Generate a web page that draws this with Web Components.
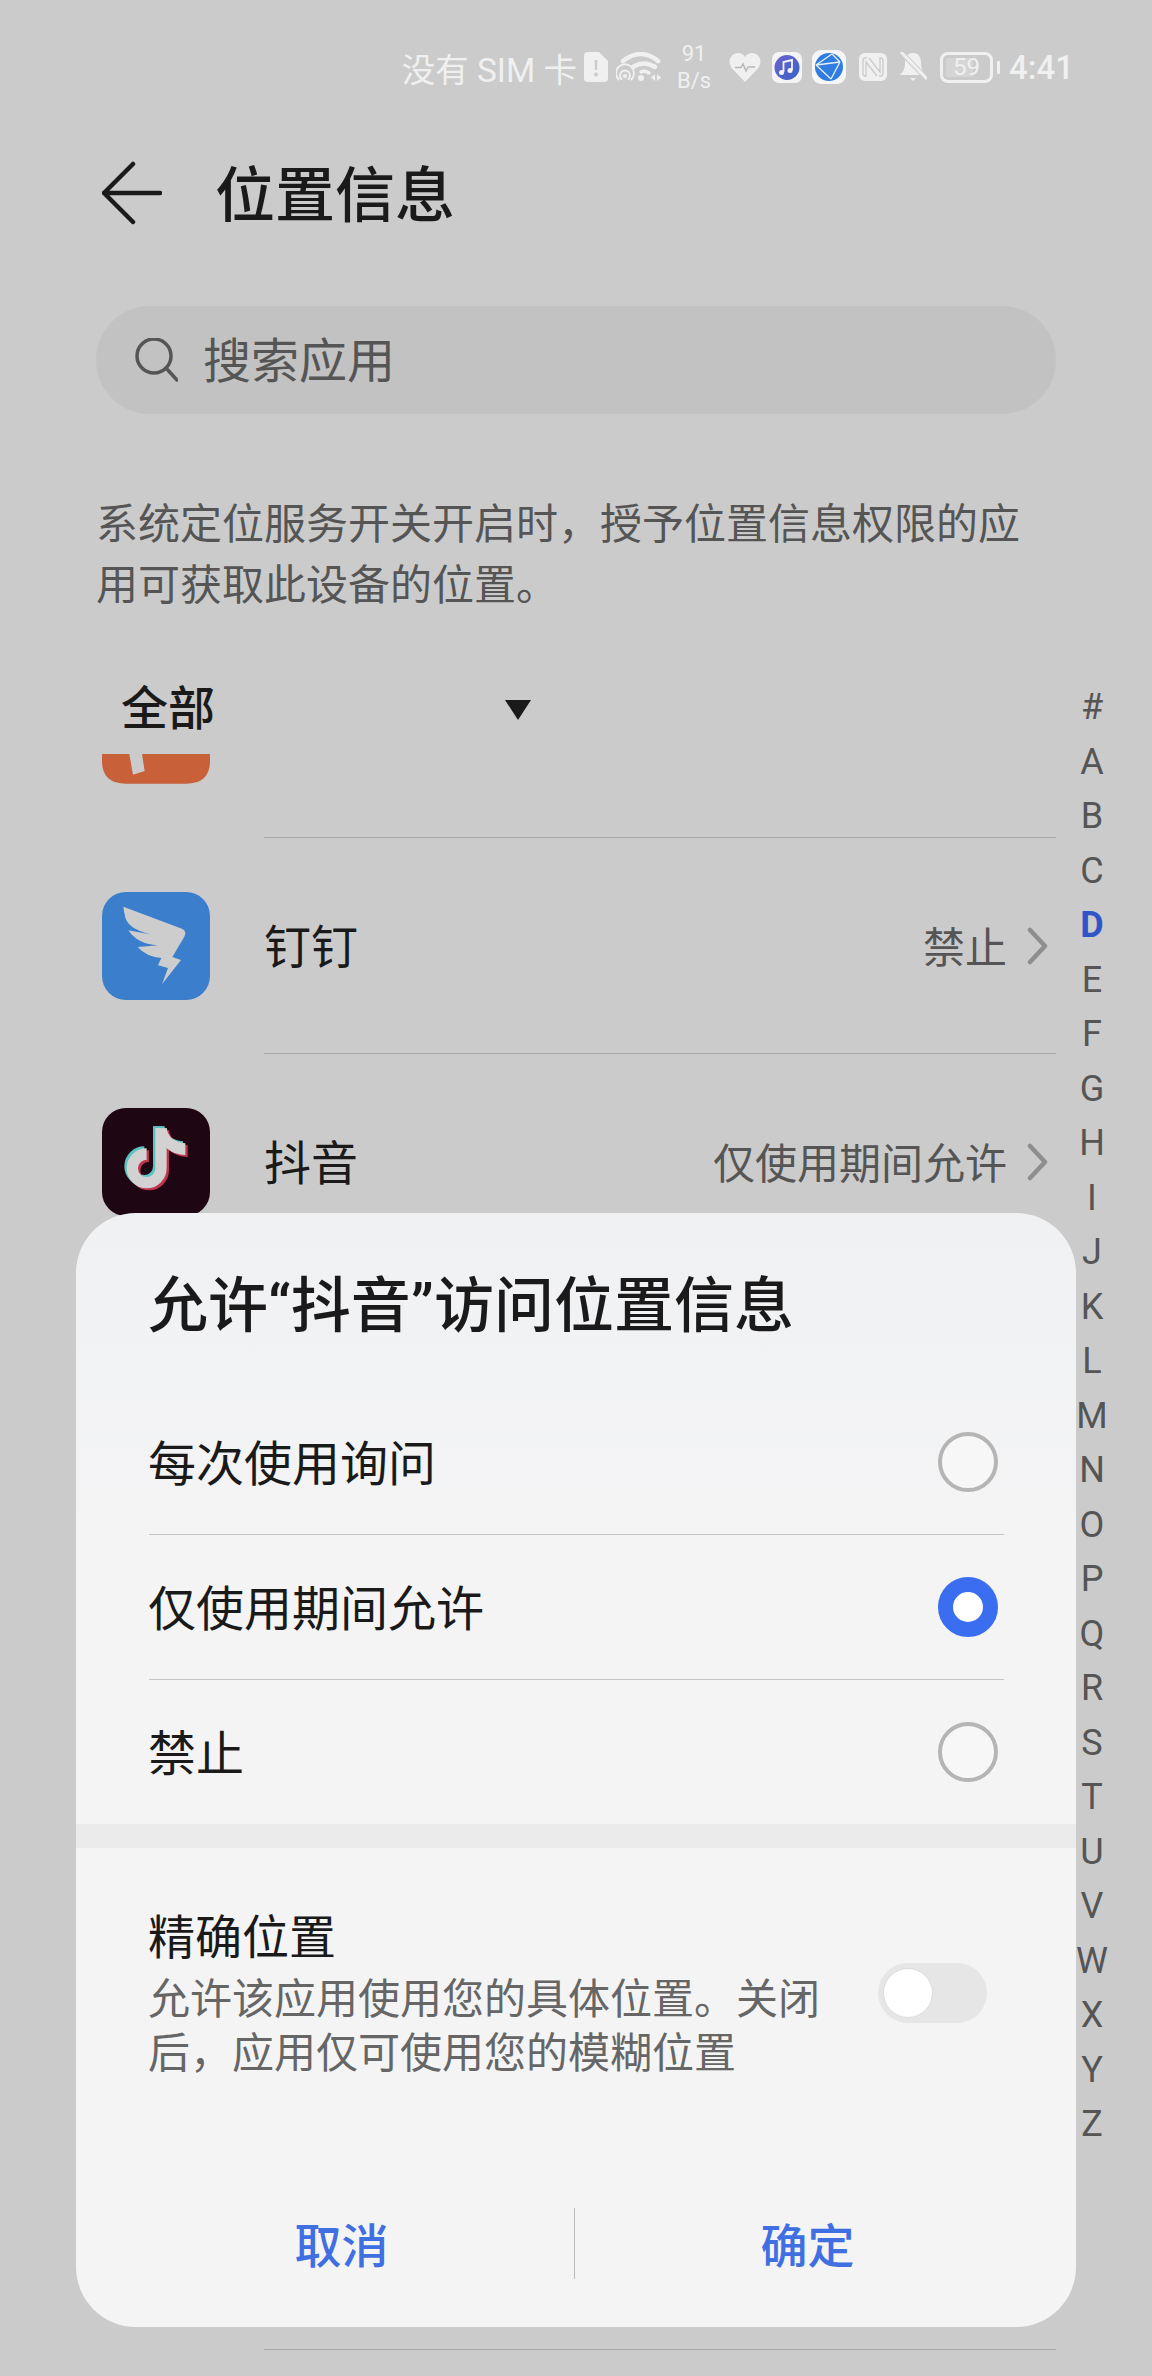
<!DOCTYPE html>
<html lang="zh-CN">
<head>
<meta charset="utf-8">
<title>位置信息</title>
<style>
  html, body {
    margin: 0;
    width: 1152px;
    height: 2376px;
    overflow: hidden;
    background: #cbcbcb;
  }
  body {
    position: relative;
    font-family: Roboto, "Noto Sans CJK SC", sans-serif;
    color: #1a1a1a;
  }
</style>
</head>
<body>
  <status-bar></status-bar>
  <page-header>位置信息</page-header>
  <search-box>搜索应用</search-box>
  <location-note>系统定位服务开关开启时，授予位置信息权限的应用可获取此设备的位置。</location-note>
  <filter-row>全部</filter-row>

  <app-list>
    <app-row clipped>
      <svg slot="icon" width="108" height="29.7" viewBox="18 41 324 89">
        <path d="M18 41H342V62Q342 130 270 130H90Q18 130 18 62Z" fill="#c8603a"/>
        <path d="M100 41H138L146 92L111 103Z" fill="#cbcbcb"/>
      </svg>
    </app-row>
    <app-row name="钉钉" value="禁止">
      <svg slot="icon" width="108" height="108" viewBox="18 18 324 324">
        <rect x="18" y="18" width="324" height="324" rx="72" fill="#3b7ecb"/>
        <path d="M82 62L258 128Q274 135 265 152L229 213L255 222L198 295L216 246L186 238L196 216Q150 212 125 183L186 178Q125 175 97 133L188 150Q100 135 88 95Q84 78 82 62Z" fill="#cdcdcd"/>
      </svg>
    </app-row>
    <app-row name="抖音" value="仅使用期间允许">
      <svg slot="icon" width="108" height="108" viewBox="18 24 324 324">
        <defs>
          <g id="note">
            <path d="M195 85V205A43 43 0 1 1 152 162" fill="none" stroke-width="34"/>
            <path d="M178 85H212Q218 125 268 130V165Q235 165 212 145Z" stroke="none"/>
          </g>
        </defs>
        <rect x="18" y="24" width="324" height="324" rx="72" fill="#1f0613"/>
        <use href="#note" x="-7" y="-6" fill="#5cc4c0" stroke="#5cc4c0"/>
        <use href="#note" x="7" y="6" fill="#c0344f" stroke="#c0344f"/>
        <use href="#note" fill="#d2d2d2" stroke="#d2d2d2"/>
      </svg>
    </app-row>
    <!-- filas tapadas por el dialogo, solo dejan ver la ultima linea -->
    <app-row style="height:1080px"></app-row>
  </app-list>

  <alpha-index active="D"></alpha-index>

  <permission-dialog heading="允许“抖音”访问位置信息" cancel="取消" confirm="确定">
    <permission-option>每次使用询问</permission-option>
    <permission-option checked>仅使用期间允许</permission-option>
    <permission-option last>禁止</permission-option>
    <precise-setting slot="extra" label="精确位置">允许该应用使用您的具体位置。关闭后，应用仅可使用您的模糊位置</precise-setting>
  </permission-dialog>

<script>
class StatusBar extends HTMLElement {
  constructor() {
    super();
    this.attachShadow({ mode: 'open' });
    this.shadowRoot.innerHTML = `
      <style>
        :host {
          display: flex;
          justify-content: flex-end;
          align-items: center;
          height: 134px;
          padding-right: 78px;
          box-sizing: border-box;
          color: #f0f0f0;
        }
        svg { display: block; flex: none; }
        .carrier { font-size: 33.5px; white-space: nowrap; }
        .speed {
          width: 34px;
          margin-left: 15px;
          font-size: 22px;
          line-height: 27px;
          text-align: center;
          white-space: nowrap;
        }
        .battery {
          width: 53px;
          height: 31px;
          margin-left: 13px;
          box-sizing: border-box;
          border: 3px solid #f0f0f0;
          border-radius: 8px;
          padding: 3px;
          background: linear-gradient(to right, rgba(255,255,255,.2) 66%, transparent 66%) content-box;
          font-size: 24px;
          line-height: 19px;
          text-align: center;
        }
        .nub {
          width: 3px;
          height: 13px;
          margin-left: 4px;
          border-radius: 1px;
          background: #f0f0f0;
        }
        .time { margin-left: 9px; font-size: 33px; font-weight: 500; }
      </style>
      <span class="carrier">没有 SIM 卡</span>
      <svg style="margin-left:7px" width="24" height="30" viewBox="0 0 24 30">
        <path d="M4 0H15L24 9V26Q24 30 20 30H4Q0 30 0 26V4Q0 0 4 0Z" fill="#f0f0f0"/>
        <path d="M10.5 8H13.5L13 18H11Z" fill="#cbcbcb"/><circle cx="12" cy="22.5" r="2" fill="#cbcbcb"/>
      </svg>
      <svg style="margin-left:8px" width="46" height="30" viewBox="0 0 46 30" fill="none" stroke="#f0f0f0" stroke-linecap="round">
        <path d="M7 9Q25 -5 42 9" stroke-width="4.500"/>
        <path d="M17 15Q28 8 39 15" stroke-width="4.500"/>
        <path d="M25 20Q29 18 33 21" stroke-width="3.500"/>
        <circle cx="25" cy="26" r="3" fill="#f0f0f0" stroke="none"/>
        <circle cx="9" cy="24" r="2" fill="#f0f0f0" stroke="none"/>
        <path d="M5.5 27A5 5 0 1 1 12.5 27" stroke-width="1.900"/>
        <path d="M2.5 27.500A9 9 0 1 1 15.500 27.500" stroke-width="1.900"/>
        <path d="M39 22V29L35 25.500Z M41 22V29L45 25.500Z" fill="#f0f0f0" stroke="none"/>
      </svg>
      <div class="speed">91<br>B/s</div>
      <svg style="margin-left:18px" width="32" height="29" viewBox="0 0 32 29">
        <path d="M16 29L3 15.500C-3 7 3 0 9 0C12 0 15 2 16 4C17 2 20 0 23 0C29 0 35 7 29 15.500Z" fill="#f0f0f0"/>
        <path d="M6 14.500H12L14 11L17 18L19 14H26" fill="none" stroke="#b8b8b8" stroke-width="1.500"/>
      </svg>
      <svg style="margin-left:11px" width="30" height="31" viewBox="0 0 30 31">
        <defs><linearGradient id="mu" x1="0" y1="0" x2="1" y2="1"><stop offset="0" stop-color="#6a62d2"/><stop offset="1" stop-color="#3a62c4"/></linearGradient></defs>
        <rect width="30" height="31" rx="7" fill="#f4f4f4"/>
        <circle cx="15" cy="15.500" r="12.500" fill="url(#mu)"/>
        <path d="M11.500 20V10L20 8V18" fill="none" stroke="#f4f4f4" stroke-width="1.800"/>
        <circle cx="9.500" cy="20.500" r="2.500" fill="#f4f4f4"/><circle cx="18" cy="18.500" r="2.500" fill="#f4f4f4"/>
      </svg>
      <svg style="margin-left:10px" width="34" height="34" viewBox="0 0 34 34">
        <rect width="34" height="34" rx="9" fill="#f6f6f6"/>
        <circle cx="17" cy="17" r="14" fill="#2f7de0"/>
        <path d="M4 15L20 4M4 15L19 29M4 15L28 12M20 4L28 12M28 12L19 29" fill="none" stroke="#e8f0fb" stroke-width="1.300"/>
      </svg>
      <svg style="margin-left:13px" width="28" height="28" viewBox="0 0 28 28" fill="none">
        <rect width="28" height="28" rx="6" fill="#f0f0f0"/>
        <path d="M8 5H6Q4 5 4 8V20Q4 23 6 23H7V9L18 23M20 23H22Q24 23 24 20V8Q24 5 22 5H21V19L10 5" stroke="#cbcbcb" stroke-width="1.300"/>
      </svg>
      <svg style="margin-left:12px" width="28" height="31" viewBox="0 0 28 31">
        <path d="M14 1C8 1 6 6 6 11C6 17 4 20 1 23H27C24 20 22 17 22 11C22 6 20 1 14 1Z" fill="#f0f0f0"/>
        <path d="M11 26H17L14 29Z" fill="#f0f0f0"/>
        <path d="M1 -1L28 27" stroke="#cbcbcb" stroke-width="5"/>
        <path d="M2 0L28 27" stroke="#f0f0f0" stroke-width="3"/>
      </svg>
      <div class="battery">59</div>
      <div class="nub"></div>
      <span class="time">4:41</span>
    `;
  }
}

class PageHeader extends HTMLElement {
  constructor() {
    super();
    this.attachShadow({ mode: 'open' });
    this.shadowRoot.innerHTML = `
      <style>
        :host {
          display: flex;
          align-items: center;
          height: 118px;
          padding-left: 102px;
          font-size: 60px;
          font-weight: 500;
          color: #1a1a1a;
        }
        svg { margin-right: 53px; flex: none; }
        span { margin-bottom: 6px; }
      </style>
      <svg width="60" height="64" viewBox="0 0 60 64" fill="none" stroke="#1a1a1a" stroke-width="4.500" stroke-linecap="round" stroke-linejoin="round">
        <path d="M31 3L2 32L31 61M2 32H58"/>
      </svg>
      <span><slot></slot></span>
    `;
  }
}

class SearchBox extends HTMLElement {
  constructor() {
    super();
    this.attachShadow({ mode: 'open' });
    this.shadowRoot.innerHTML = `
      <style>
        :host {
          display: flex;
          align-items: center;
          width: 960px;
          height: 108px;
          margin: 54px 0 0 96px;
          padding-left: 38px;
          box-sizing: border-box;
          border-radius: 54px;
          background: #c2c2c2;
          font-size: 48px;
          color: #555;
        }
        svg { margin-right: 25px; flex: none; }
        span { margin-bottom: 6px; }
      </style>
      <svg width="44" height="44" viewBox="0 0 44 44" fill="none" stroke="#555" stroke-width="3.500" stroke-linecap="round">
        <circle cx="20" cy="18" r="17"/><path d="M32 30L43 42"/>
      </svg>
      <span><slot></slot></span>
    `;
  }
}

class LocationNote extends HTMLElement {
  constructor() {
    super();
    this.attachShadow({ mode: 'open' });
    this.shadowRoot.innerHTML = `
      <style>
        :host {
          display: block;
          width: 940px;
          margin: 80px 0 0 96px;
          font-size: 42px;
          line-height: 61px;
          color: #555;
        }
      </style>
      <slot></slot>
    `;
  }
}

class FilterRow extends HTMLElement {
  constructor() {
    super();
    this.attachShadow({ mode: 'open' });
    this.shadowRoot.innerHTML = `
      <style>
        :host {
          display: flex;
          align-items: center;
          height: 94px;
          margin-top: 44px;
          padding-left: 121px;
          font-size: 47px;
          font-weight: 500;
          color: #1a1a1a;
        }
        span.label { margin-bottom: 6px; }
        .arrow {
          width: 0;
          height: 0;
          margin-left: 290px;
          margin-top: 6px;
          border-left: 13px solid transparent;
          border-right: 13px solid transparent;
          border-top: 20px solid #1a1a1a;
        }
      </style>
      <span class="label"><slot></slot></span>
      <span class="arrow"></span>
    `;
  }
}

class AppList extends HTMLElement {
  constructor() {
    super();
    this.attachShadow({ mode: 'open' });
    this.shadowRoot.innerHTML = `
      <style>:host { display: block; overflow: hidden; }</style>
      <slot></slot>
    `;
  }
}

class AppRow extends HTMLElement {
  constructor() {
    super();
    this.attachShadow({ mode: 'open' });
  }

  connectedCallback() {
    const name = this.getAttribute('name');
    const value = this.getAttribute('value');
    const content = name ? `
      <span class="name">${name}</span>
      <span class="value">${value}</span>
      <svg width="21" height="38" viewBox="0 0 21 38" fill="none" stroke="#8e8e8e" stroke-width="4.500" stroke-linecap="round" stroke-linejoin="round">
        <path d="M3 3L18 19L3 35"/>
      </svg>` : '';

    this.shadowRoot.innerHTML = `
      <style>
        :host {
          display: flex;
          height: 216px;
          box-sizing: border-box;
          margin-right: 96px;
          padding-left: 102px;
        }
        :host([clipped]) { height: 84px; }
        .icon { width: 108px; flex: none; margin-right: 54px; align-self: center; line-height: 0; }
        :host([clipped]) .icon { align-self: flex-start; }
        .body {
          flex: 1;
          display: flex;
          align-items: center;
          padding-right: 8px;
          border-bottom: 1px solid #a8a8a8;
        }
        .name { flex: 1; margin-bottom: 4px; font-size: 47px; color: #1a1a1a; }
        .value { font-size: 42px; color: #555; margin-right: 20px; margin-bottom: 2px; }
      </style>
      <div class="icon"><slot name="icon"></slot></div>
      <div class="body">${content}</div>
    `;
  }
}

class AlphaIndex extends HTMLElement {
  constructor() {
    super();
    this.attachShadow({ mode: 'open' });
  }

  connectedCallback() {
    const active = this.getAttribute('active');
    const letters = '#ABCDEFGHIJKLMNOPQRSTUVWXYZ'.split('');
    const items = letters.map(l => `<span class="${l === active ? 'on' : ''}">${l}</span>`).join('');

    this.shadowRoot.innerHTML = `
      <style>
        :host {
          position: absolute;
          left: 1062px;
          top: 680px;
          width: 60px;
          display: grid;
          grid-auto-rows: 54.5px;
          justify-items: center;
          align-items: center;
          font-size: 36px;
          color: #555;
        }
        .on { color: #2f55c8; font-weight: 700; }
      </style>
      ${items}
    `;
  }
}

class PermissionOption extends HTMLElement {
  constructor() {
    super();
    this.attachShadow({ mode: 'open' });
    this.shadowRoot.innerHTML = `
      <style>
        :host {
          display: flex;
          align-items: center;
          justify-content: space-between;
          height: 145px;
          box-sizing: border-box;
          margin: 0 72px 0 73px;
          padding-right: 6px;
          border-bottom: 1px solid #c4c4c4;
          font-size: 48px;
          color: #1a1a1a;
        }
        :host([last]) { height: 144px; border-bottom: 0; }
        .label { margin: 0 0 5px -1px; }
        .radio {
          width: 60px;
          height: 60px;
          box-sizing: border-box;
          border: 4px solid #b5b5b5;
          border-radius: 50%;
          background: #f7f7f7;
        }
        :host([checked]) .radio {
          border: 15px solid #3a6df0;
          background: #fff;
        }
      </style>
      <span class="label"><slot></slot></span>
      <span class="radio"></span>
    `;
  }
}

class PreciseSetting extends HTMLElement {
  constructor() {
    super();
    this.attachShadow({ mode: 'open' });
  }

  connectedCallback() {
    this.shadowRoot.innerHTML = `
      <style>
        :host {
          display: flex;
          align-items: center;
          justify-content: space-between;
          padding: 60px 89px 0 72px;
        }
        .text { width: 680px; }
        .label { font-size: 47px; line-height: 60px; color: #1a1a1a; }
        .hint { margin-top: 5px; font-size: 42px; line-height: 54px; color: #666; }
        .toggle {
          width: 109px;
          height: 60px;
          padding: 5px;
          margin-top: -4px;
          box-sizing: border-box;
          border-radius: 30px;
          background: #e6e6e6;
        }
        .knob {
          width: 50px;
          height: 50px;
          box-sizing: border-box;
          border: 1px solid #dcdcdc;
          border-radius: 50%;
          background: #fff;
        }
      </style>
      <div class="text">
        <div class="label">${this.getAttribute('label')}</div>
        <div class="hint"><slot></slot></div>
      </div>
      <div class="toggle"><div class="knob"></div></div>
    `;
  }
}

class PermissionDialog extends HTMLElement {
  constructor() {
    super();
    this.attachShadow({ mode: 'open' });
  }

  connectedCallback() {
    this.shadowRoot.innerHTML = `
      <style>
        :host {
          position: absolute;
          left: 76px;
          top: 1213px;
          width: 1000px;
          height: 1114px;
          display: flex;
          flex-direction: column;
          border-radius: 60px;
          background: linear-gradient(#f0f1f3, #f4f4f5 30%);
          overflow: hidden;
        }
        h2 {
          margin: 0;
          padding: 65px 0 54px 72px;
          font-size: 60px;
          line-height: 58px;
          font-weight: 500;
          color: #1a1a1a;
        }
        .band { flex: none; height: 24px; background: #ebebeb; }
        .actions {
          display: flex;
          align-items: center;
          height: 71px;
          margin-top: auto;
          margin-bottom: 48px;
          padding: 0 36px 0 33px;
          font-size: 47px;
          font-weight: 500;
          color: #3f6fe0;
        }
        .actions span { flex: 1; margin-bottom: 3px; text-align: center; }
        .actions i { width: 1px; height: 71px; background: #bbb; }
      </style>
      <h2>${this.getAttribute('heading')}</h2>
      <slot></slot>
      <div class="band"></div>
      <slot name="extra"></slot>
      <div class="actions">
        <span>${this.getAttribute('cancel')}</span>
        <i></i>
        <span>${this.getAttribute('confirm')}</span>
      </div>
    `;
  }
}

customElements.define('status-bar', StatusBar);
customElements.define('page-header', PageHeader);
customElements.define('search-box', SearchBox);
customElements.define('location-note', LocationNote);
customElements.define('filter-row', FilterRow);
customElements.define('app-list', AppList);
customElements.define('app-row', AppRow);
customElements.define('alpha-index', AlphaIndex);
customElements.define('permission-option', PermissionOption);
customElements.define('precise-setting', PreciseSetting);
customElements.define('permission-dialog', PermissionDialog);
</script>
</body>
</html>
